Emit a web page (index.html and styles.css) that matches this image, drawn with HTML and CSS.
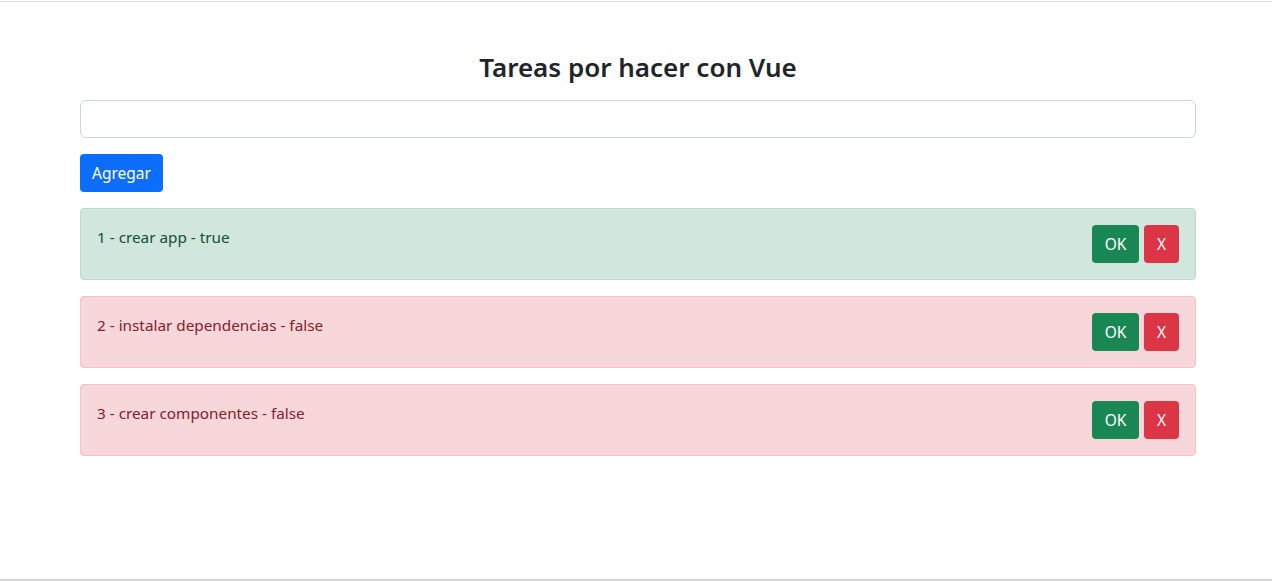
FILE: index.html
```html
<!DOCTYPE html>
<html lang="es">
<head>
<meta charset="utf-8">
<title>Tareas por hacer con Vue</title>
<link rel="stylesheet" href="styles.css">
</head>
<body>
<div class="page">
  <div class="topline"></div>
  <main class="container">
    <h3 class="title">Tareas por hacer con Vue</h3>
    <input class="form-control" type="text">
    <button class="btn btn-primary add">Agregar</button>
    <div class="alert alert-success">
      <span>1 - crear app - true</span>
      <div class="actions"><button class="btn btn-success">OK</button><button class="btn btn-danger">X</button></div>
    </div>
    <div class="alert alert-danger">
      <span>2 - instalar dependencias - false</span>
      <div class="actions"><button class="btn btn-success">OK</button><button class="btn btn-danger">X</button></div>
    </div>
    <div class="alert alert-danger">
      <span>3 - crear componentes - false</span>
      <div class="actions"><button class="btn btn-success">OK</button><button class="btn btn-danger">X</button></div>
    </div>
  </main>
  <div class="bottomline"></div>
</div>
</body>
</html>
```
FILE: styles.css
```css
* { box-sizing: border-box; }
html, body { margin: 0; padding: 0; background: #fff; }
body {
  font-family: "Noto Sans", "Open Sans", sans-serif;
  font-size: 16px;
  line-height: 1.5;
  color: #212529;
}
.page {
  height: 581px;
  display: flex;
  flex-direction: column;
}
.topline {
  margin-top: 1px;
  height: 1px;
  background: #dcdcdc;
}
.container {
  flex: 1;
  width: 1116px;
  margin-left: 80px;
  display: flex;
  flex-direction: column;
  align-items: stretch;
}
.title {
  margin: 50px 0 18px;
  font-size: 26px;
  font-weight: 600;
  line-height: 30px;
  text-align: center;
  color: #212529;
}
.form-control {
  display: block;
  height: 38px;
  padding: 6px 12px;
  font: inherit;
  border: 1px solid #ced4da;
  border-radius: 6px;
  background: #fff;
  margin: 0 0 16px;
}
.btn {
  font: inherit;
  font-size: 15.5px;
  line-height: 24px;
  padding: 7px 12px;
  border: 0;
  border-radius: 4px;
  color: #fff;
  cursor: pointer;
}
.btn-primary { background: #0d6efd; }
.btn-success { background: #198754; }
.btn-danger { background: #dc3545; }
.add {
  align-self: flex-start;
  height: 38px;
  width: 83px;
  padding: 0;
  margin-bottom: 16px;
}
.alert {
  display: flex;
  justify-content: space-between;
  align-items: flex-start;
  padding: 16px;
  margin-bottom: 16px;
  border: 1px solid transparent;
  border-radius: 4px;
  height: 72px;
  font-size: 15.3px;
}
.alert span { line-height: 24px; }
.alert-success { background: #d1e7dd; border-color: #badbcc; color: #0f5132; }
.alert-danger { background: #f8d7da; border-color: #f5c2c7; color: #842029; }
.actions { display: flex; gap: 5px; }
.actions .btn { height: 38px; padding: 0; }
.actions .btn-success { width: 47px; }
.actions .btn-danger { width: 35px; }
.bottomline {
  height: 2px;
  background: #d4d4d4;
}
```
